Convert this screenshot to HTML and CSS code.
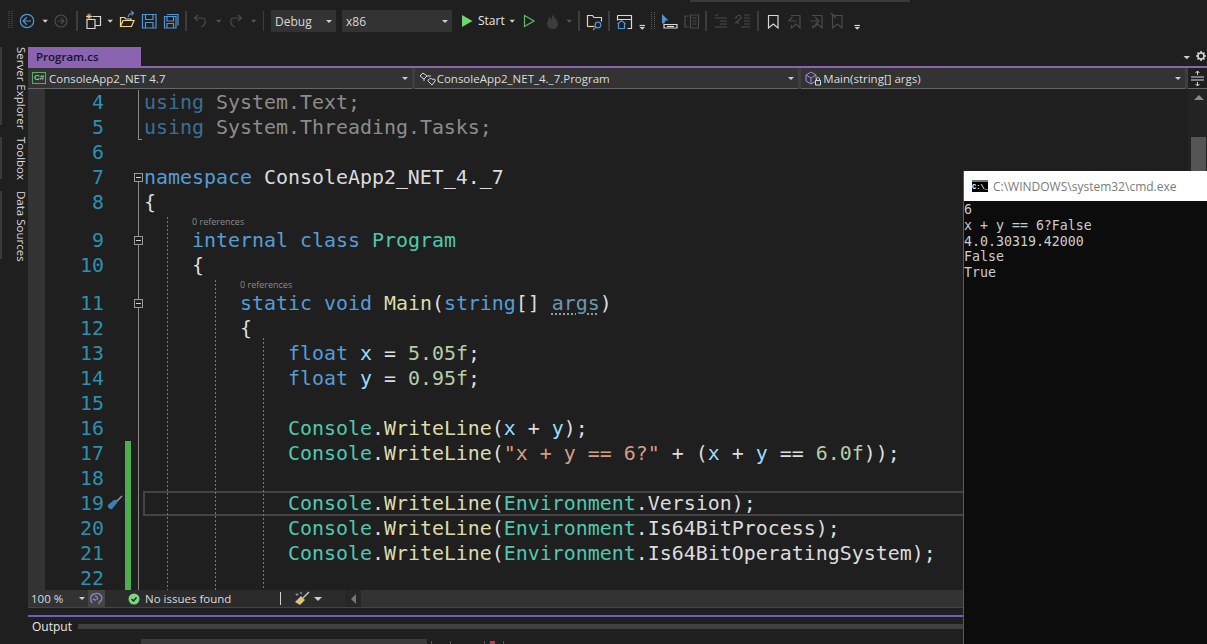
FILE: index.html
```html
<!DOCTYPE html>
<html lang="en">
<head>
<meta charset="utf-8">
<title>Program.cs</title>
<link rel="stylesheet" href="styles.css">
</head>
<body>
<div class="app">
  <header class="toolbar">
    <svg class="tools" width="264" height="42" viewBox="0 0 264 42">
      <path class="grip" d="M9 11v18M12 11v18"/>
      <circle class="blue" cx="27" cy="21" r="6.7"/><path class="blue" d="M31 21h-7.5M26.8 17.3 23 21l3.8 3.700"/>
      <path class="drop" d="M42.500 19.800h5.500L45.200 22.800z"/>
      <circle class="dim" cx="61" cy="21" r="6"/><path class="dim" d="M57.500 21h6.500M61 18l3 3-3 3"/>
      <rect class="sep" x="76" y="11" width="2" height="20"/>
      <path class="star" d="M89 13.500v6M86 16.500h6M87 14.500l4 4M91 14.500l-4 4"/>
      <path class="white" d="M92.500 16.500h8v9h-5M87 19.500h8v9h-8z"/>
      <path class="drop" d="M107.500 19.800h5.500l-2.800 3z"/>
      <path class="yellow" d="M120.500 26.500v-9h4l1.500 1.500h5v2M120.500 26.500l2.500-6h11l-2.500 6z"/>
      <path class="blue" d="M128 17c1-3 3-4 5-4M131 11l2.500 2-2 2.500"/>
      <path class="blue" d="M142.500 14.500h13.500v13.500h-13.500zM145.500 14.500v5h7.500v-5M145.500 28v-5.500h7.500v5.500"/>
      <path class="blue" d="M164.500 16.500h11.500v11.500h-11.500zM167 16.500v4.500h6.500v-4.500M167 28v-4.500h6.500v4.500M167 14.500h11v11"/>
      <rect class="sep" x="185" y="11" width="2" height="20"/>
      <path class="dim" d="M198 15l-3.500 3 3.500 3M195 18h7c4 0 5 7-1 9"/>
      <path class="dimdrop" d="M216 19.800h5.500l-2.800 3z"/>
      <path class="dim" d="M238 15l3.500 3-3.500 3M241 18h-7c-4 0-5 7 1 9"/>
      <path class="dimdrop" d="M251 19.800h5.500l-2.800 3z"/>
      <rect class="sep" x="263" y="11" width="1" height="20"/>
    </svg>
    <div class="combo combo-debug"><span>Debug</span><i class="caret"></i></div>
    <div class="combo combo-arch"><span>x86</span><i class="caret"></i></div>
    <svg class="tools play" width="26" height="42" viewBox="452 0 26 42">
      <path class="fill-green" d="M462 15l10.500 6-10.500 6z"/>
    </svg>
    <span class="start">Start</span>
    <svg class="tools" width="405" height="42" viewBox="505 0 405 42">
      <path class="drop" d="M509.500 19.800h5.500l-2.800 3z"/>
      <path class="green" d="M524.500 15.500l9.500 5.500-9.500 5.500z"/>
      <path class="dimfill" d="M552 14c1 3 6 5 6 10 0 3-2 5-5 5s-6-2-6-5c0-3 2-4 2-7 1 1 2 1 3 3z"/>
      <path class="dimdrop" d="M566.500 19.800h5.500l-2.800 3z"/>
      <rect class="sep" x="578" y="11" width="2" height="20"/>
      <path class="yellow" d="M587.500 26.500v-11h5l1.500 2h7.500v4"/>
      <path class="yellow" d="M587.500 26.500h7"/>
      <circle class="blue" cx="598" cy="25" r="2.800"/><path class="blue" d="M596 27l-3 3"/>
      <rect class="sep" x="608" y="11" width="2" height="20"/>
      <path class="white" d="M617.500 15.500h14v13h-4M617.500 15.500v5M617.500 19.500h14"/>
      <path class="blue" d="M617.500 24l4-3.500 4 3.500M618.500 23.500v5h6v-5"/>
      <path class="drop" d="M639.500 27h5.500l-2.800 2.800z"/><path class="white" d="M639.500 25.500h5.500"/>
      <path class="grip" d="M651.500 12v18M654.500 12v18"/>
      <path class="fill-blue" d="M662 14l6.500 6.500h-3l-1.500 3.500-2-1z"/>
      <path class="white" d="M664 24.500h13v3.500h-13z"/><path class="white" d="M667 26.500h7"/>
      <path class="dim" d="M689 16h-4v11h4M690.500 15h8v13h-8zM692.500 18h4M692.500 21h4M692.500 24h4"/>
      <rect class="sep" x="705" y="11" width="2" height="20"/>
      <path class="dim" d="M715 15h3M715 18h12M720 21h7M720 24h7M715 27h12"/>
      <path class="dim" d="M736 19c-1-4 6-5 5-1l-3 3M735 23l3-2 0 3M744 15h6M744 18h6M744 21h6M744 24h6M741 27h9"/>
      <rect class="sep" x="757" y="11" width="2" height="20"/>
      <path class="white" d="M768.500 15.500h9.500v12.500l-4.700-4-4.800 4z"/>
      <path class="dim" d="M788.500 21l4-4M788.500 21h8M791 15.500h9v12.500l-4-4-4.500 4v-3"/>
      <path class="dim" d="M810 21h8M815 17l4 4-4 4M812 15.500h10v12.500l-4.500-4-4.500 4v-3"/>
      <path class="dim" d="M832.500 15.500h9.500v12.500l-4.700-4-4.800 4zM831 13l5 5"/>
      <path class="drop" d="M854.500 27h5.500l-2.800 2.800z"/><path class="white" d="M854.500 25.500h5.500"/>
      <rect class="topline" x="690" y="0" width="220" height="2"/>
    </svg>
  </header>

  <div class="workspace">
    <aside class="sidebar">
      <div class="vtab vtab-server">Server Explorer</div>
      <div class="vtab vtab-toolbox">Toolbox</div>
      <div class="vtab vtab-data">Data Sources</div>
    </aside>

    <main class="main">
      <div class="tabstrip">
        <div class="tab">Program.cs</div>
        <svg class="tab-actions" width="26" height="19" viewBox="0 0 26 19">
          <path class="drop" d="M2.500 9h6.500l-3.200 3.200z"/>
          <circle class="gear" cx="20" cy="9" r="3"/>
          <path class="gear" d="M20 4v2M20 12v2M15 9h2M23 9h2M16.500 5.500l1.500 1.500M22 11l1.500 1.500M16.500 12.500l1.500-1.500M22 7l1.500-1.500"/>
        </svg>
      </div>
      <div class="accent"></div>
      <nav class="navbar">
        <div class="navcombo">
          <span class="csharp">C#</span>
          <span class="navlabel">ConsoleApp2_NET 4.7</span><i class="caret"></i>
        </div>
        <div class="navcombo">
          <svg class="navicon" width="17" height="15" viewBox="0 0 17 15">
            <path class="white-thin" d="M1 5l3-3 4 3-3 3zM8 5h4M5 8v2"/>
            <path class="white-thin" d="M9 10c0-3 5-3 5-1 0-2 3-1 2 1l-3 4z"/>
          </svg>
          <span class="navlabel">ConsoleApp2_NET_4._7.Program</span><i class="caret"></i>
        </div>
        <div class="navcombo">
          <svg class="navicon" width="17" height="15" viewBox="0 0 17 15">
            <path class="cube" d="M1 4l5-3 5 3v6l-5 3-5-3zM1 4l5 3 5-3M6 7v6"/>
            <path class="white-thin" d="M10.500 9.500h5v4.500h-5zM11.500 9.500v-1.500c0-2 3-2 3 0v1.500"/>
          </svg>
          <span class="navlabel">Main(string[] args)</span><i class="caret"></i>
        </div>
        <div class="splitter">
          <svg width="19" height="21" viewBox="0 0 19 21">
            <path class="white-thin" d="M3 9h13M3 12h13M9.500 3v4M9.500 14v4M7.500 5l2-2 2 2M7.500 16l2 2 2-2"/>
          </svg>
        </div>
      </nav>

      <section class="editor">
        <div class="stripe"></div>
        <div class="code">
          <div class="line"><span class="ln">4</span><span class="glyph"></span><span class="change"></span><span class="fold bar"></span><div class="text"><span class="dimkw">using</span> <span class="dimtxt">System.Text;</span></div></div>
          <div class="line"><span class="ln">5</span><span class="glyph"></span><span class="change"></span><span class="fold bar corner"></span><div class="text"><span class="dimkw">using</span> <span class="dimtxt">System.Threading.Tasks;</span></div></div>
          <div class="line"><span class="ln">6</span><span class="glyph"></span><span class="change"></span><span class="fold"></span><div class="text"></div></div>
          <div class="line"><span class="ln">7</span><span class="glyph"></span><span class="change"></span><span class="fold bar-start"><i class="toggle"></i></span><div class="text"><span class="kw">namespace</span> ConsoleApp2_NET_4._7</div></div>
          <div class="line"><span class="ln">8</span><span class="glyph"></span><span class="change"></span><span class="fold bar"></span><div class="text">{</div></div>
          <div class="line"><span class="ln lens-pad">9</span><span class="glyph"></span><span class="change"></span><span class="fold bar"><i class="toggle"></i></span><div class="text"><div class="refs refs-1">0 references</div>    <span class="kw">internal</span> <span class="kw">class</span> <span class="type">Program</span></div></div>
          <div class="line"><span class="ln">10</span><span class="glyph"></span><span class="change"></span><span class="fold bar"></span><div class="text">    {</div></div>
          <div class="line"><span class="ln lens-pad">11</span><span class="glyph"></span><span class="change"></span><span class="fold bar"><i class="toggle"></i></span><div class="text"><div class="refs refs-2">0 references</div>        <span class="kw">static</span> <span class="kw">void</span> <span class="fn">Main</span>(<span class="kw">string</span>[] <span class="unused">args</span>)</div></div>
          <div class="line"><span class="ln">12</span><span class="glyph"></span><span class="change"></span><span class="fold bar"></span><div class="text">        {</div></div>
          <div class="line"><span class="ln">13</span><span class="glyph"></span><span class="change"></span><span class="fold bar"></span><div class="text">            <span class="kw">float</span> <span class="var">x</span> = <span class="num">5.05f</span>;</div></div>
          <div class="line"><span class="ln">14</span><span class="glyph"></span><span class="change"></span><span class="fold bar"></span><div class="text">            <span class="kw">float</span> <span class="var">y</span> = <span class="num">0.95f</span>;</div></div>
          <div class="line"><span class="ln">15</span><span class="glyph"></span><span class="change"></span><span class="fold bar"></span><div class="text"></div></div>
          <div class="line"><span class="ln">16</span><span class="glyph"></span><span class="change"></span><span class="fold bar"></span><div class="text">            <span class="type">Console</span>.<span class="fn">WriteLine</span>(<span class="var">x</span> + <span class="var">y</span>);</div></div>
          <div class="line"><span class="ln">17</span><span class="glyph"></span><span class="change saved"></span><span class="fold bar"></span><div class="text">            <span class="type">Console</span>.<span class="fn">WriteLine</span>(<span class="str">"x + y == 6?"</span> + (<span class="var">x</span> + <span class="var">y</span> == <span class="num">6.0f</span>));</div></div>
          <div class="line"><span class="ln">18</span><span class="glyph"></span><span class="change saved"></span><span class="fold bar"></span><div class="text"></div></div>
          <div class="line"><span class="ln">19</span><span class="glyph">
            <svg width="19" height="19" viewBox="0 0 19 19">
              <path class="driver-tip" d="M11 8l6-6"/>
              <path class="driver" d="M3 11l6-5c2-1 4 1 3 3l-5 6c-2 1-5-2-4-4z"/>
            </svg></span><span class="change saved"></span><span class="fold bar"></span><div class="text current">            <span class="type">Console</span>.<span class="fn">WriteLine</span>(<span class="type">Environment</span>.Version);</div></div>
          <div class="line"><span class="ln">20</span><span class="glyph"></span><span class="change saved"></span><span class="fold bar"></span><div class="text">            <span class="type">Console</span>.<span class="fn">WriteLine</span>(<span class="type">Environment</span>.Is64BitProcess);</div></div>
          <div class="line"><span class="ln">21</span><span class="glyph"></span><span class="change saved"></span><span class="fold bar"></span><div class="text">            <span class="type">Console</span>.<span class="fn">WriteLine</span>(<span class="type">Environment</span>.Is64BitOperatingSystem);</div></div>
          <div class="line"><span class="ln">22</span><span class="glyph"></span><span class="change saved"></span><span class="fold bar"></span><div class="text"></div></div>
          <i class="guide guide-1"></i><i class="guide guide-2"></i><i class="guide guide-3"></i>
        </div>
        <div class="vscroll"><i class="up"></i><i class="thumb"></i></div>
      </section>

      <footer class="status">
        <div class="zoom"><span>100 %</span><i class="caret"></i></div>
        <svg class="intelli" width="17" height="17" viewBox="0 0 17 17">
          <path class="brain" d="M4 13c-2-3-2-8 2-9 4-2 8 1 8 4l-1 3c-2 0-2 1-2 3M7 6c2 0 3 2 2 4M5 9c1 1 2 1 3 1"/>
        </svg>
        <svg class="okmark" width="14" height="14" viewBox="0 0 14 14">
          <circle class="ok" cx="7" cy="7" r="5.500"/><path class="okcheck" d="M4.500 7l2 2 3-3.500"/>
        </svg>
        <span class="issues">No issues found</span>
        <i class="status-sep"></i>
        <svg class="broom" width="16" height="15" viewBox="0 0 16 15">
          <path class="broom-h" d="M15 1l-6 6"/>
          <path class="broom-b" d="M7 5l4 4-5 5-5-3z"/>
          <path class="broom-s" d="M3 2v3M1.500 3.500h3M7 1v2M6 2h2"/>
        </svg>
        <i class="caret caret-status"></i>
        <div class="hscroll-btn"><i class="left"></i></div>
        <div class="hscroll"></div>
      </footer>

      <section class="panel">
        <div class="panel-head"><span class="panel-title">Output</span><i class="panel-grip"></i></div>
        <div class="panel-tools">
          <i class="panel-combo"></i><i class="psep psep-a"></i><i class="psep psep-b"></i><i class="psep psep-c"></i><i class="pred"></i><i class="psep psep-d"></i>
        </div>
      </section>
    </main>
  </div>

  <div class="cmd">
    <div class="cmd-title">
      <span class="cmd-icon">C:\_</span>
      <span>C:\WINDOWS\system32\cmd.exe</span>
    </div>
    <pre class="cmd-body">6
x + y == 6?False
4.0.30319.42000
False
True</pre>
  </div>
</div>
</body>
</html>
```
FILE: styles.css
```css
* { box-sizing: border-box; }
html, body { margin: 0; height: 100%; }
body { background: #1f1f1f; color: #dcdcdc; font-family: "Open Sans", "Noto Sans", sans-serif; overflow: hidden; }
i { display: block; font-style: normal; }

.app { position: relative; width: 1207px; height: 644px; display: flex; flex-direction: column; overflow: hidden; }

/* toolbar */
.toolbar { height: 47px; flex: none; display: flex; align-items: flex-start; padding-top: 0; }
.tools { flex: none; display: block; overflow: visible; }
.tools path, .tools circle { fill: none; stroke-width: 1.200; }
.combo { height: 22px; margin-top: 10px; background: #333; display: flex; align-items: center; justify-content: space-between; padding: 0 4px; font-size: 12px; color: #d8d8d8; flex: none; }
.combo-debug { width: 65px; margin-left: 7px; }
.combo-arch { width: 110px; margin-left: 6px; }
.caret { width: 0; height: 0; border: 3px solid transparent; border-top: 3px solid #cfcfcf; border-bottom: 0; }
.start { width: 27px; flex: none; font-size: 12px; color: #e6e6e6; margin-top: 12px; line-height: 18px; }

.tools .grip { stroke: #5a5a5a; stroke-dasharray: 1 1; stroke-width: 1; }
.tools .blue { stroke: #4f95d8; }
.tools .dim { stroke: #4b4b4b; }
.tools .drop { fill: #d0d0d0; stroke: none; }
.tools .dimdrop { fill: #555; stroke: none; }
.tools .white { stroke: #d8d8d8; }
.tools .star { stroke: #eed58c; stroke-width: 1; }
.tools .yellow { stroke: #f0d78f; }
.tools .green { stroke: #68b868; }
.tools .fill-green { fill: #71d56f; stroke: none; }
.tools .fill-blue { fill: #4f95d8; stroke: none; }
.tools .dimfill { fill: #3c3c3c; stroke: none; }
.sep { fill: #3d3d3d; }
.topline { fill: #3a3a3a; }

/* workspace */
.workspace { flex: 1; display: flex; min-height: 0; }
.sidebar { width: 28px; flex: none; display: flex; flex-direction: column; gap: 12px; }
.vtab { writing-mode: vertical-rl; font-size: 11.500px; line-height: 13px; color: #dcdcdc; padding-left: 5px; border-left: 2px solid #3a3a3a; white-space: nowrap; }
.vtab-server { height: 78px; }
.vtab-toolbox { height: 42px; }
.vtab-data { height: 68px; }

.main { flex: 1; min-width: 0; display: flex; flex-direction: column; }
.tabstrip { height: 19px; flex: none; display: flex; justify-content: space-between; }
.tab { width: 113px; background: #8a64b0; color: #15132c; font-size: 11.500px; font-weight: 600; line-height: 20px; padding-left: 8px; }
.tab-actions { display: block; }
.tab-actions .gear { fill: none; stroke: #d8d8d8; stroke-width: 1.500; }
.tab-actions .drop { fill: #d0d0d0; }
.accent { height: 2px; flex: none; background: #8a64b0; }

.navbar { height: 21px; flex: none; display: flex; gap: 3px; background: #3e3e3e; }
.navcombo { flex: 1; min-width: 0; background: #333; border-bottom: 1px solid #666; display: flex; align-items: center; padding: 0 4px; font-size: 11.500px; color: #dcdcdc; }
.navlabel { flex: 1; white-space: nowrap; }
.navicon { flex: none; margin-right: 1px; display: block; }
.csharp { width: 14px; height: 12px; flex: none; margin-right: 3px; border: 1px solid #62a862; color: #8fd08f; font: bold 8px/10px "Liberation Sans", sans-serif; text-align: center; }
.splitter { width: 19px; flex: none; background: #1f1f1f; border-bottom: 1px solid #666; }
.splitter svg { display: block; }
.white-thin { fill: none; stroke: #d8d8d8; stroke-width: 1; }
.cube { fill: none; stroke: #a98ad8; stroke-width: 1; }

/* editor */
.editor { height: 501px; flex: none; display: flex; overflow: hidden; }
.stripe { width: 17px; flex: none; background: #333; }
.code { position: relative; flex: 1; min-width: 0; padding-top: 1px; font-family: "DejaVu Sans Mono", monospace; font-size: 19.930px; line-height: 25px; }
.line { display: flex; align-items: stretch; }
.ln { width: 59px; flex: none; color: #2b91af; text-align: right; align-self: flex-end; }
.glyph { width: 21px; flex: none; display: flex; align-items: center; }
.glyph svg { display: block; margin-left: 1px; }
.driver { fill: #3f7fb8; stroke: none; }
.driver-tip { fill: none; stroke: #9a9a9a; stroke-width: 1.500; }
.change { width: 6px; flex: none; }
.change.saved { background: #4cae50; }
.fold { width: 13px; flex: none; display: flex; align-items: flex-end; }
.fold.bar { background: linear-gradient(#8a8a8a, #8a8a8a) 7px 0 / 1px 100% no-repeat; }
.fold.corner { background: linear-gradient(#8a8a8a, #8a8a8a) 7px 0 / 1px 100% no-repeat, linear-gradient(#8a8a8a, #8a8a8a) 7px 24px / 4px 1px no-repeat; }
.fold.bar-start { background: linear-gradient(#8a8a8a, #8a8a8a) 7px 12px / 1px 13px no-repeat; }
.toggle { width: 9px; height: 9px; margin: 0 0 8px 3px; background: #1f1f1f linear-gradient(#cfcfcf, #cfcfcf) center / 5px 1px no-repeat; border: 1px solid #9a9a9a; }
.text { flex: 1; min-width: 0; white-space: pre; color: #dcdcdc; }
.text.current { margin-left: -1px; padding-left: 1px; box-shadow: inset 0 0 0 2px #444; }
.refs { height: 13px; font: 9px/13px "Open Sans", sans-serif; color: #8a8a8a; }
.refs-1 { margin-left: 48px; }
.refs-2 { margin-left: 96px; }
.dimkw { color: #3c6e95; }
.dimtxt { color: #8c8c8c; }
.kw { color: #569cd6; }
.type { color: #4ec9b0; }
.fn { color: #dcdcaa; }
.var { color: #9cdcfe; }
.num { color: #b5cea8; }
.str { color: #d69d85; }
.unused { color: #6f96b2; text-decoration: underline dotted #9a9a9a; text-underline-offset: 4px; }
.guide { position: absolute; width: 1px; bottom: 0; background: repeating-linear-gradient(#777 0 2px, transparent 2px 4px); }
.guide-1 { left: 122px; top: 128px; }
.guide-2 { left: 170px; top: 191px; }
.guide-3 { left: 218px; top: 249px; }
.vscroll { width: 19px; flex: none; background: #232323; position: relative; padding: 0 1px 0 3px; }
.up { width: 0; height: 0; margin: 6px auto 0; border: 5px solid transparent; border-bottom: 5px solid #8a8a8a; border-top: 0; }
.thumb { height: 60px; margin-top: 37px; background: #555; }

/* status */
.status { height: 18px; flex: none; display: flex; align-items: center; background: #2b2b2b; border-bottom: 1px solid #444; font-size: 11.500px; color: #dcdcdc; }
.zoom { width: 60px; height: 17px; flex: none; background: #333; display: flex; align-items: center; justify-content: space-between; padding: 0 3px; }
.intelli { flex: none; display: block; background: #444; }
.brain { fill: none; stroke: #9a7ad8; stroke-width: 1.300; }
.okmark { flex: none; display: block; margin-left: 22px; }
.ok { fill: #7fd47f; }
.okcheck { fill: none; stroke: #173317; stroke-width: 1.500; }
.issues { width: 135px; flex: none; margin-left: 4px; white-space: nowrap; }
.status-sep { width: 1px; height: 13px; flex: none; background: #d0d0d0; }
.broom { flex: none; display: block; margin-left: 13px; }
.broom-h { fill: none; stroke: #cfcfcf; stroke-width: 1.200; }
.broom-b { fill: #dcc27a; }
.broom-s { fill: none; stroke: #7ea8e0; stroke-width: .8; }
.caret-status { margin-left: 4px; flex: none; border-width: 4px; border-top-width: 4px; }
.hscroll-btn { width: 16px; height: 17px; flex: none; margin-left: 23px; background: #262626; display: flex; align-items: center; justify-content: center; }
.left { width: 0; height: 0; border: 5px solid transparent; border-right: 5px solid #777; border-left: 0; }
.hscroll { flex: 1; height: 17px; background: #333; }

/* output panel */
.panel { flex: 1; margin-top: 7px; border-top: 2px solid #6a5fc4; }
.panel-head { height: 18px; display: flex; align-items: center; padding-left: 4px; }
.panel-title { font-size: 12px; color: #e8e8e8; width: 46px; flex: none; }
.panel-grip { flex: 1; height: 5px; background: radial-gradient(circle, #666 0.6px, transparent 0.8px) 0 0 / 2px 2px; }
.panel-tools { height: 9px; position: relative; display: flex; align-items: flex-end; }
.panel-combo { width: 286px; height: 5px; margin-left: 113px; flex: none; background: #3a3a3a; }
.psep { width: 1px; height: 3px; flex: none; background: #555; }
.psep-a { margin-left: 4px; }
.psep-b { margin-left: 18px; }
.psep-c { margin-left: 33px; }
.pred { width: 5px; height: 3px; flex: none; margin-left: 5px; background: #b04050; }
.psep-d { margin-left: 8px; }

/* console window */
.cmd { position: absolute; left: 963px; top: 171px; width: 244px; height: 473px; background: #0c0c0c; border-left: 1px solid #5a5a5a; display: flex; flex-direction: column; }
.cmd-title { height: 30px; flex: none; background: #fff; display: flex; align-items: center; padding-left: 8px; font-size: 12px; color: #7a7a7a; gap: 5px; }
.cmd-icon { width: 16px; height: 12px; flex: none; background: #000; border-top: 2px solid #777; color: #fff; font: bold 7px/10px "Liberation Mono", monospace; text-align: center; overflow: hidden; }
.cmd-body { margin: 0; padding-top: 1px; font-family: "DejaVu Sans Mono", monospace; font-size: 13.280px; line-height: 15.750px; color: #cccccc; }
```
